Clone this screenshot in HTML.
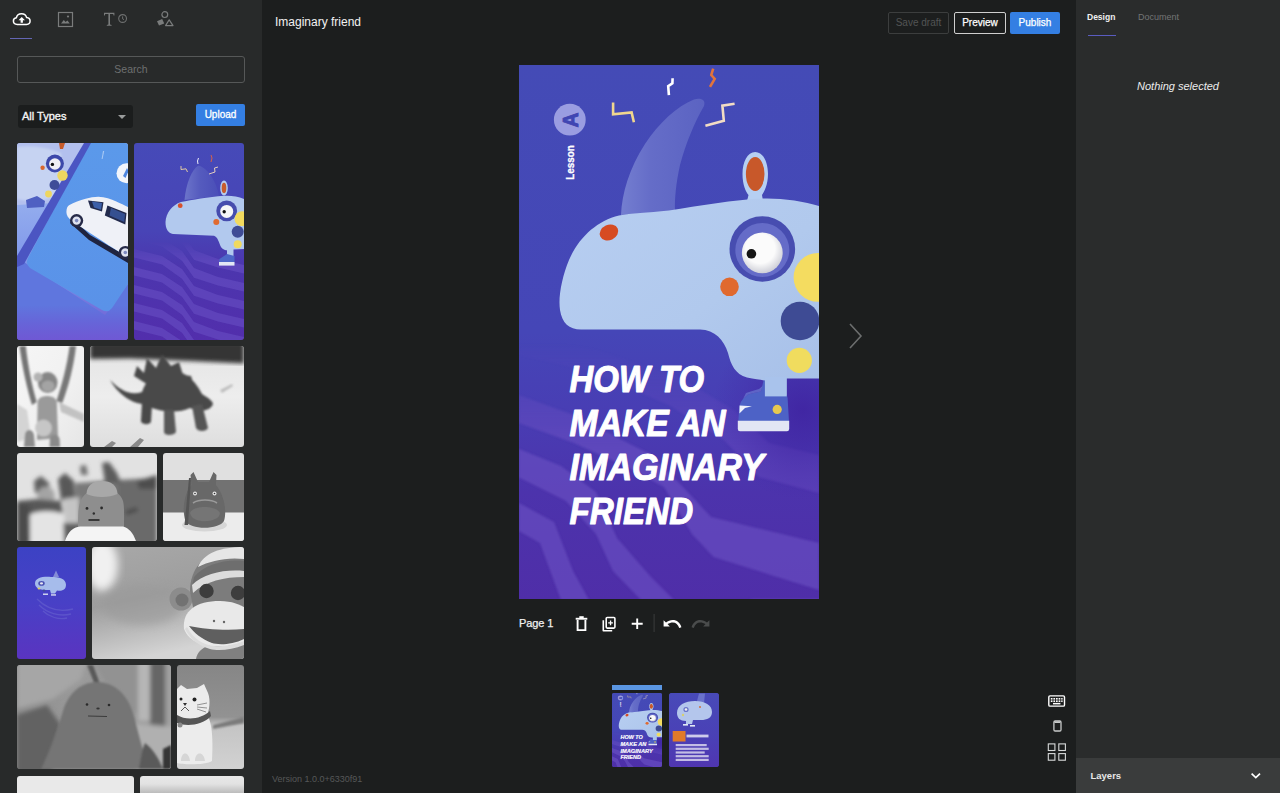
<!DOCTYPE html>
<html>
<head>
<meta charset="utf-8">
<title>Imaginary friend</title>
<style>
*{box-sizing:border-box;margin:0;padding:0}
html,body{width:1280px;height:793px;overflow:hidden;background:#1c1e1e;font-family:"Liberation Sans",sans-serif;color:#fff}
.abs{position:absolute}
#left{position:absolute;left:0;top:0;width:262px;height:793px;background:#282a2a;overflow:hidden}
#center{position:absolute;left:262px;top:0;width:814px;height:793px;background:#1c1e1e;overflow:hidden}
#right{position:absolute;left:1076px;top:0;width:204px;height:793px;background:#2a2c2c;overflow:hidden}
.tile{position:absolute;overflow:hidden;border-radius:3px}
.tile svg{position:absolute;left:0;top:0;width:100%;height:100%;display:block}
.btn{position:absolute;font-size:11px;text-align:center;border-radius:2px}
</style>
</head>
<body>

<!-- ================= LEFT PANEL ================= -->
<div id="left">
  <!-- tabs -->
  <div id="tabs">
  <!-- upload cloud -->
  <svg class="abs" style="left:12px;top:12px" width="19.5" height="14.2" viewBox="0 0 22 16">
    <path d="M6,14 C3.2,14 1.6,12.2 1.6,10.2 C1.6,8.2 3,6.8 4.9,6.6 C5.4,3.8 7.8,2 10.8,2 C13.6,2 15.8,3.7 16.5,6.2 C18.8,6.4 20.4,8 20.4,10.2 C20.4,12.4 18.7,14 16.4,14 Z" fill="none" stroke="#ffffff" stroke-width="1.7" stroke-linejoin="round"/>
    <path d="M11,5.6 L14.6,9.4 L12.3,9.4 L12.3,12 L9.7,12 L9.7,9.4 L7.4,9.4 Z" fill="#ffffff"/>
  </svg>
  <!-- image -->
  <svg class="abs" style="left:57px;top:11px" width="17" height="17" viewBox="0 0 17 17">
    <rect x="1.5" y="1.5" width="14" height="14" fill="none" stroke="#7a7c7c" stroke-width="1.2"/>
    <path d="M4,12.5 L6.8,9 L8.6,11 L10.4,9.6 L12.8,12.5Z" fill="#7a7c7c"/>
    <circle cx="11" cy="5.5" r="1.1" fill="#7a7c7c"/>
  </svg>
  <!-- text -->
  <svg class="abs" style="left:102px;top:11px" width="28" height="17" viewBox="0 0 28 17">
    <path d="M2,1.8 L12.4,1.8 L12.4,4.6 L11.6,4.6 L11.2,2.9 L8,2.9 L8,13.6 L9.6,14 L9.6,14.8 L4.8,14.8 L4.8,14 L6.4,13.6 L6.4,2.9 L3.2,2.9 L2.8,4.6 L2,4.6Z" fill="#7a7c7c"/>
    <circle cx="20.6" cy="7.5" r="3.9" fill="none" stroke="#6e7070" stroke-width="1.1"/>
    <path d="M20.6,5.4 L20.6,7.9 L22,8.6" fill="none" stroke="#6e7070" stroke-width="1"/>
  </svg>
  <!-- shapes -->
  <svg class="abs" style="left:155px;top:10px" width="21" height="18" viewBox="0 0 21 18">
    <circle cx="9.8" cy="4.6" r="2.9" fill="none" stroke="#7a7c7c" stroke-width="1.2"/>
    <path d="M2,11.2 L7.2,9 L9.2,13.4 L4,15.6Z" fill="#7a7c7c"/>
    <path d="M14.2,9.8 L18,15.6 L10.6,15.6Z" fill="none" stroke="#7a7c7c" stroke-width="1.2" stroke-linejoin="round"/>
  </svg>
</div>

  <div class="abs" style="left:10px;top:38px;width:22px;height:1px;background:#6466b4"></div>
  <!-- search -->
  <div class="abs" style="left:17px;top:56px;width:228px;height:27px;border:1px solid #565858;border-radius:3px;color:#6e7070;font-size:10.5px;line-height:25px;text-align:center">Search</div>
  <!-- dropdown -->
  <div class="abs" style="left:18px;top:105px;width:115px;height:23px;background:#1b1d1d;border-radius:3px;font-size:11px;line-height:23px;padding-left:4px;color:#f4f4f4;-webkit-text-stroke:0.35px #f4f4f4">All Types</div>
  <div class="abs" style="left:118px;top:115px;width:0;height:0;border-left:4px solid transparent;border-right:4px solid transparent;border-top:4px solid #9a9c9c"></div>
  <!-- upload -->
  <div class="btn" style="left:196px;top:104px;width:49px;height:22px;background:#347fe3;color:#fff;line-height:22px;font-size:10px;-webkit-text-stroke:0.3px #fff">Upload</div>

  <div id="gallery">
<svg width="0" height="0" style="position:absolute">
  <defs>
    <filter id="b1" x="-10%" y="-10%" width="120%" height="120%"><feGaussianBlur stdDeviation="1"/></filter>
    <filter id="b2" x="-10%" y="-10%" width="120%" height="120%"><feGaussianBlur stdDeviation="2"/></filter>
    <filter id="b4" x="-20%" y="-20%" width="140%" height="140%"><feGaussianBlur stdDeviation="4"/></filter>
    <filter id="b05" x="-10%" y="-10%" width="120%" height="120%"><feGaussianBlur stdDeviation="0.5"/></filter>
  </defs>
</svg>

<!-- Tile A : phone + car -->
<div class="tile" style="left:17px;top:143px;width:111px;height:197px">
<svg viewBox="0 0 111 197" preserveAspectRatio="none">
  <defs>
    <linearGradient id="ta1" x1="0" y1="0" x2="0" y2="1"><stop offset="0" stop-color="#a9bcf0"/><stop offset="0.3" stop-color="#94adee"/><stop offset="0.6" stop-color="#8098ea"/><stop offset="1" stop-color="#6c58d2"/></linearGradient>
    <linearGradient id="ta2" x1="0" y1="0" x2="0" y2="1"><stop offset="0" stop-color="#5b99ea"/><stop offset="1" stop-color="#5a92e8"/></linearGradient>
    <linearGradient id="ta3" x1="0" y1="0" x2="0" y2="1"><stop offset="0.58" stop-color="#5f76de"/><stop offset="0.8" stop-color="#6764d8"/><stop offset="1" stop-color="#6f58d4"/></linearGradient>
  </defs>
  <rect width="111" height="197" fill="url(#ta1)"/>
  <path d="M0,0 L70,0 L36,60 L0,62Z" fill="#b3c0ee"/>
  <path d="M0,4 C14,2 30,4 44,10 L47,46 C38,58 18,60 0,56Z" fill="#c6d3f2" filter="url(#b1)"/>
  <path d="M0,114 L10,121 L88,172 L111,141 L111,197 L0,197Z" fill="url(#ta3)"/>
  <path d="M72,0 L111,0 L111,141 L95,165 Q91,170.5 85,167 L13,125 Q8,121 11,115 Z" fill="url(#ta2)"/>
  <path d="M67,0 L74,0 L7,121 L0,124 L0,113Z" fill="#4b55c2"/>
  <!-- rhino bits -->
  <circle cx="37.9" cy="20.5" r="9" fill="#3d48aa"/><circle cx="37.9" cy="21" r="5.8" fill="#f0f0f4"/><circle cx="35.4" cy="21.4" r="1.7" fill="#111"/>
  <circle cx="45.5" cy="32.5" r="5.2" fill="#eed660"/><circle cx="37.5" cy="42" r="5" fill="#3f4c98"/><circle cx="31.5" cy="51" r="3.4" fill="#eed660"/>
  <circle cx="25.6" cy="24.8" r="2.2" fill="#d8672e"/>
  <path d="M42,0 L48,0 L46,6 L43,6Z" fill="#c65a2a"/>
  <path d="M9,57 L20,53 L28,58 L27,64 L10,65Z" fill="#4f60c2" filter="url(#b05)"/>
  <!-- white disc -->
  <circle cx="109.5" cy="30.2" r="10" fill="#f2f5fb"/><path d="M106,33 l4,-8 l1.5,3 l-3,7z" fill="#4d86e0"/>
  <path d="M86,8 l1.2,0 l-1.6,8 l-1,0z" fill="#a8c8f4"/>
  <!-- car -->
  <path d="M56,76 L73,92 L111,114 L111,120 L72,97 L53,80Z" fill="#1f2440"/>
  <path d="M49.4,69 C49.5,65 50.5,63.2 52,62.2 C57,59.5 63,57 68.6,55.8 C73,54.6 77,53.9 81.4,53.8 C88,54 94,56 99.3,58.4 C103.5,60.3 107.5,62.3 111,64 L111,114 C99,107 86,98.5 73.7,90.4 C66,85.6 60,81.4 54.5,77.6 C51,75 49.4,72 49.4,69Z" fill="#eff1f7"/>
  <path d="M71,57.4 L86.5,59.2 L85,68.4 L73.5,65 Z" fill="#222a4c"/><path d="M75,58.6 L85,60 L84,66.8 L77,64.6Z" fill="#3c5fa8"/>
  <path d="M90.4,62.4 L109.5,70 L108.3,81.6 L87.8,72.6 Z" fill="#222a4c"/><path d="M94,65 L108,71 L107.2,79 L92.5,72.4Z" fill="#3b5aa2" opacity="0.8"/>
  <circle cx="59.6" cy="77.6" r="6.6" fill="#262a48"/><circle cx="59.6" cy="77.6" r="4.2" fill="#dfe3f0"/><circle cx="59.6" cy="77.6" r="1.8" fill="#7f8bc0"/>
  <circle cx="108.3" cy="109.5" r="6.6" fill="#262a48"/><circle cx="108.3" cy="109.5" r="4.2" fill="#dfe3f0"/><circle cx="108.3" cy="109.5" r="1.8" fill="#7f8bc0"/>
</svg>
</div>

<!-- Tile B : rhino thumb -->
<div class="tile" style="left:134px;top:143px;width:110px;height:197px">
<svg viewBox="0 0 110 197" preserveAspectRatio="none">
  <defs>
    <linearGradient id="tb1" x1="0" y1="0" x2="0" y2="1"><stop offset="0" stop-color="#464ab8"/><stop offset="0.45" stop-color="#4844b6"/><stop offset="0.62" stop-color="#4c36ae"/><stop offset="1" stop-color="#522eac"/></linearGradient>
    <linearGradient id="tbf" x1="0" y1="0" x2="0" y2="1"><stop offset="0.5" stop-color="#fff" stop-opacity="0"/><stop offset="0.6" stop-color="#fff" stop-opacity="1"/></linearGradient>
    <mask id="tbm"><rect width="110" height="197" fill="url(#tbf)"/></mask>
    <linearGradient id="tbh" x1="0" y1="0" x2="1" y2="0"><stop offset="0" stop-color="#6c74ca"/><stop offset="0.45" stop-color="#555bbe"/><stop offset="1" stop-color="#4a4eb8"/></linearGradient>
  </defs>
  <rect width="110" height="197" fill="url(#tb1)"/>
  <g fill="#6c54c8" fill-opacity="0.5" filter="url(#b05)" mask="url(#tbm)">
    <path d="M0.0,88.0 L28.0,95.0 L48.0,108.0 L60.0,125.0 L84.0,134.0 L110.0,140.0 L110.0,148.5 L84.0,142.5 L60.0,134.8 L48.0,117.8 L28.0,103.5 L0.0,96.5Z"/>
    <path d="M0.0,106.0 L28.0,113.0 L48.0,126.0 L60.0,143.0 L84.0,152.0 L110.0,158.0 L110.0,166.5 L84.0,160.5 L60.0,152.8 L48.0,135.8 L28.0,121.5 L0.0,114.5Z"/>
    <path d="M0.0,124.0 L28.0,131.0 L48.0,144.0 L60.0,161.0 L84.0,170.0 L110.0,176.0 L110.0,184.5 L84.0,178.5 L60.0,170.8 L48.0,153.8 L28.0,139.5 L0.0,132.5Z"/>
    <path d="M0.0,142.0 L28.0,149.0 L48.0,162.0 L60.0,179.0 L84.0,188.0 L110.0,194.0 L110.0,202.5 L84.0,196.5 L60.0,188.8 L48.0,171.8 L28.0,157.5 L0.0,150.5Z"/>
    <path d="M0.0,160.0 L28.0,167.0 L48.0,180.0 L60.0,197.0 L84.0,206.0 L110.0,212.0 L110.0,220.5 L84.0,214.5 L60.0,206.8 L48.0,189.8 L28.0,175.5 L0.0,168.5Z"/>
    <path d="M0.0,178.0 L28.0,185.0 L48.0,198.0 L60.0,215.0 L84.0,224.0 L110.0,230.0 L110.0,238.5 L84.0,232.5 L60.0,224.8 L48.0,207.8 L28.0,193.5 L0.0,186.5Z"/>
    <path d="M0.0,196.0 L28.0,203.0 L48.0,216.0 L60.0,233.0 L84.0,242.0 L110.0,248.0 L110.0,256.5 L84.0,250.5 L60.0,242.8 L48.0,225.8 L28.0,211.5 L0.0,204.5Z"/>
    <path d="M0.0,70.0 L28.0,77.0 L48.0,90.0 L60.0,107.0 L84.0,116.0 L110.0,122.0 L110.0,130.5 L84.0,124.5 L60.0,116.8 L48.0,99.8 L28.0,85.5 L0.0,78.5Z"/>
  </g>
  <path d="M50.5,57 C52,40 58,26 64.5,22.5 C74,25 82,38 85,53Z" fill="url(#tbh)"/>
  <ellipse cx="90" cy="45" rx="3.8" ry="7.4" fill="#b4ccf0"/><ellipse cx="90" cy="45" rx="2.3" ry="5.2" fill="#c85c2c"/>
  <path d="M110,56 C104,53 96,52.5 90,52.8 C74,54 58,57 47,59 C38,62 32,70 31.5,79 C31.5,86 34,90 39,91 L80,92.7 C84,94 85,100 87,104 C89,107 92,107 93,107.5 L93,114 L99.5,114 L99.5,106.5 L110,106Z" fill="#b2c9ee"/>
  <circle cx="92.7" cy="67.9" r="10.4" fill="#464cae"/><circle cx="92.7" cy="68.4" r="6.5" fill="#f6f6f8"/><circle cx="90.2" cy="68.8" r="1.7" fill="#111"/>
  <circle cx="46.2" cy="62.7" r="2.4" fill="#d8502a"/><circle cx="82.3" cy="78.9" r="3" fill="#e06a30"/>
  <circle cx="108" cy="75.7" r="7.4" fill="#f2da5e"/><circle cx="103.7" cy="88.8" r="6" fill="#3f4c96"/><circle cx="103.7" cy="101.3" r="4" fill="#f0da5e"/>
  <path d="M85,119 L85.5,116 L93,111 L100.5,113 L100.5,119.5Z" fill="#4d67c8"/><rect x="85" y="119" width="15.5" height="3.6" fill="#e2e7f4"/>
  <g fill="none" stroke-width="0.9"><polyline points="47,23 47,26.5 52,25.8 53.5,29" stroke="#f0d8a0"/><polyline points="64.5,15 63.5,18 64,21" stroke="#fff"/><polyline points="77,12 78,15 77,19" stroke="#e8643c"/><polyline points="84,24 80.5,25 81,29 75,31" stroke="#f4dcc0"/></g>
</svg>
</div>

<!-- Tile C : wooden monkey -->
<div class="tile" style="left:17px;top:346px;width:67px;height:101px">
<svg viewBox="0 0 67 101" preserveAspectRatio="none">
  <defs><linearGradient id="tc1" x1="0" y1="0" x2="1" y2="1"><stop offset="0" stop-color="#f6f6f6"/><stop offset="0.6" stop-color="#f0f0f0"/><stop offset="1" stop-color="#e6e6e6"/></linearGradient></defs>
  <rect width="67" height="101" fill="url(#tc1)"/>
  <g filter="url(#b1)">
    <path d="M0,58 L10,64 L14,92 L0,96Z" fill="#d4d4d4"/>
    <path d="M42,56 L67,68 L67,76 L44,66Z" fill="#c2c2c2"/>
    <path d="M2.4,0 L8.8,0 C11,20 15,40 19.7,56 L15,59 C10,42 5,20 2.4,0Z" fill="#747474"/>
    <path d="M52.6,0 L59,0 C57,20 51,42 45.3,57 L39.5,55 C45,38 50,20 52.6,0Z" fill="#787878"/>
    <ellipse cx="30.7" cy="36.6" rx="9.8" ry="10.5" fill="#868686"/>
    <ellipse cx="21" cy="31" rx="4.5" ry="4.5" fill="#b2b2b2"/>
    <ellipse cx="31" cy="40" rx="6.5" ry="5.5" fill="#a4a4a4"/>
    <path d="M20.6,56 C21,48 39,48 39.8,56 L41,92 L20,94Z" fill="#9a9a9a"/>
    <ellipse cx="26.5" cy="82" rx="8.4" ry="8.6" fill="#c6c6c6"/>
    <path d="M7,101 L8,88 C9.5,82 16,83 17,89 L18,101Z" fill="#8c8c8c"/>
    <path d="M32.5,101 L33,92 C34.5,87 42,88 42.6,93 L43,101Z" fill="#8a8a8a"/>
  </g>
</svg>
</div>

<!-- Tile D : stegosaurus -->
<div class="tile" style="left:90px;top:346px;width:154px;height:101px">
<svg viewBox="0 0 154 101" preserveAspectRatio="none">
  <defs><linearGradient id="td1" x1="0" y1="0" x2="0" y2="1"><stop offset="0" stop-color="#e4e4e4"/><stop offset="0.5" stop-color="#ededed"/><stop offset="1" stop-color="#dedede"/></linearGradient></defs>
  <rect width="154" height="101" fill="url(#td1)"/>
  <path d="M0,-4 L154,-4 L154,17.5 L100,15 L40,12.5 L0,13Z" fill="#343434" filter="url(#b2)"/>
  <g filter="url(#b1)" fill="#4a4a4a">
    <path d="M20,34 C30,44 40,50 52,46 C56,34 64,26 78,24 C96,24 106,36 112,48 C118,52 122,54 123,58 C120,66 108,66 100,62 C88,68 66,66 54,58 C42,58 28,48 20,34Z"/>
    <path d="M44,30 L47,20 L54,27 L57,12 L66,22 L72,8 L81,20 L89,16 L93,29 L101,30 L104,40 L60,40Z" fill="#484848"/>
    <path d="M52,56 L62,58 L61,76 C58,80 50,78 51,74Z"/>
    <path d="M74,64 L84,64 L86,86 C84,90 74,90 74,86Z" fill="#585858"/>
    <path d="M102,60 L112,58 L118,82 C116,86 108,86 106,82Z" fill="#545454"/>
  </g>
  <path d="M130,44 L142,38 L143,40 L132,47Z" fill="#bdbdbd" filter="url(#b1)"/>
  <path d="M14,101 L22,95 L26,97 L22,101Z M40,101 L50,92 L54,94 L48,101Z" fill="#8a8a8a" filter="url(#b05)"/>
</svg>
</div>

<!-- Tile E : peanut -->
<div class="tile" style="left:17px;top:453px;width:140px;height:88px">
<svg viewBox="0 0 140 88" preserveAspectRatio="none">
  <rect width="140" height="88" fill="#e2e2e2"/>
  <g filter="url(#b2)">
    <path d="M99,27 L140,25 L140,92 L99,92Z" fill="#6a6a6a"/>
    <path d="M58,30 L100,27 L100,92 L58,92Z" fill="#787878"/>
    <path d="M85,10 L92,9 L100,20 L104,30 L88,30Z" fill="#5c5c5c"/>
    <path d="M63,13 L69,12 L71,22 L64,22Z" fill="#707070"/>
    <path d="M120,28 L140,22 L140,36 L122,36Z" fill="#4e4e4e"/>
    <path d="M108,58 L120,54 L121,58 L110,62Z" fill="#4a4a4a"/>
    <path d="M41,26 L48,20 L57,28 L58,48 L44,48Z" fill="#585858"/>
    <path d="M17,28 L24,23 L32,30 L33,40 L18,40Z" fill="#5e5e5e"/>
    <ellipse cx="29" cy="43" rx="9" ry="9.5" fill="#a4a4a4"/>
    <path d="M0,48 L20,46 L44,48 L46,60 L0,62Z" fill="#585858"/>
    <path d="M0,50 L13,52 L13,92 L0,92Z" fill="#4c4c4c"/>
    <path d="M46,46 L62,44 L62,72 L48,72Z" fill="#c4c4c4"/>
    <path d="M44,70 L62,70 L60,92 L44,92Z" fill="#5e5e5e"/>
    <path d="M13,62 C18,57 42,57 46,62 L47,92 L14,92Z" fill="#e4e4e4"/>
  </g>
  <g filter="url(#b05)">
    <path d="M61,76 C61,58 61.5,52 64,47 C66,43 68,41 70,40 L100,40 C103,42 104.5,44 106,48 C107.5,54 107,62 107,76Z" fill="#8e8e8e"/>
    <path d="M69.5,41 C70,32 76,28 85,28 C94,28 100,32 100.5,41 C92,45 78,45 69.5,41Z" fill="#a8a8a8"/>
    <path d="M48,88 C51,79 56,74 63,73.5 L106,73.5 C112,75 116,80 119,88Z" fill="#f4f4f4"/>
    <circle cx="70" cy="55.4" r="1.4" fill="#2a2a2a"/><circle cx="84.6" cy="55" r="1.4" fill="#2a2a2a"/><circle cx="76.8" cy="60.5" r="1.2" fill="#2e2e2e"/>
    <rect x="71.5" y="66.2" width="11" height="1.6" fill="#222"/>
  </g>
</svg>
</div>

<!-- Tile F : totoro -->
<div class="tile" style="left:163px;top:453px;width:81px;height:88px">
<svg viewBox="0 0 81 88" preserveAspectRatio="none">
  <rect width="81" height="88" fill="#e0e0e0"/>
  <rect y="27" width="81" height="33" fill="#727272" filter="url(#b05)"/>
  <rect y="59.5" width="81" height="29" fill="#ececec"/>
  <g filter="url(#b05)">
    <ellipse cx="41.5" cy="72" rx="22.5" ry="6.5" fill="#d6d6d6"/>
    <path d="M27.5,22 L30.5,19 L35,29 L46,29 L50.5,19 L53.5,22 L53,32 C60,40 64.5,56 61,68 C56,77 27,77 22.5,68 C18.5,56 21.5,40 28.5,32Z" fill="#686868"/>
    <path d="M27,60 C29,52 54,52 57,60 C57,70 29,72 27,60Z" fill="#747474"/>
    <path d="M30,50 C36,46 48,46 54,50" stroke="#9a9a9a" stroke-width="1.6" fill="none"/>
    <circle cx="32" cy="40.5" r="2" fill="#e4e4e4"/><circle cx="51.5" cy="40.5" r="2" fill="#e4e4e4"/><circle cx="32" cy="40.5" r="0.8" fill="#333"/><circle cx="51.5" cy="40.5" r="0.8" fill="#333"/>
    <path d="M26,25 L28,25 L25,72 L21.5,72Z" fill="#555"/>
  </g>
</svg>
</div>

<!-- Tile G : blue small -->
<div class="tile" style="left:17px;top:547px;width:69px;height:112px">
<svg viewBox="0 0 69 112" preserveAspectRatio="none">
  <defs><linearGradient id="tg1" x1="0" y1="0" x2="0" y2="1"><stop offset="0" stop-color="#3c42c4"/><stop offset="0.5" stop-color="#4840c6"/><stop offset="1" stop-color="#5a34c0"/></linearGradient></defs>
  <rect width="69" height="112" fill="url(#tg1)"/>
  <g fill="none" stroke="#6a66d0" stroke-width="1.3" opacity="0.55"><path d="M20,52 C28,60 40,66 56,62"/><path d="M22,58 C30,66 42,70 54,67"/><path d="M26,64 C32,70 42,73 50,71"/></g>
  <g filter="url(#b05)" transform="translate(0,10.5) scale(1,0.72)" opacity="0.93">
    <path d="M18,36 C18,28 26,26 34,27 C42,27 49,29 49,38 C49,46 44,47 40,46 L38,50 L34,50 L33,45 C26,46 18,44 18,36Z" fill="#aec6ee"/>
    <path d="M36,27 L39,18 L42,27Z" fill="#8a92d8"/>
    <circle cx="24.5" cy="36" r="3.2" fill="#4a52b0"/><circle cx="24.5" cy="36" r="1.6" fill="#f4f4f4"/>
    <circle cx="22" cy="43" r="1.4" fill="#e8d860"/><circle cx="27" cy="46" r="1.5" fill="#3f4c96"/>
    <rect x="26" y="50" width="5" height="2" fill="#dfe5f3"/><rect x="34" y="51" width="5" height="2" fill="#dfe5f3"/>
  </g>
</svg>
</div>

<!-- Tile H : sock monkey -->
<div class="tile" style="left:92px;top:547px;width:152px;height:112px">
<svg viewBox="0 0 152 112" preserveAspectRatio="none">
  <defs>
    <linearGradient id="th1" x1="0" y1="0" x2="0.3" y2="1"><stop offset="0" stop-color="#a8a8a8"/><stop offset="0.5" stop-color="#9e9e9e"/><stop offset="0.78" stop-color="#bcbcbc"/><stop offset="1" stop-color="#d4d4d4"/></linearGradient>
  </defs>
  <rect width="152" height="112" fill="url(#th1)"/>
  <ellipse cx="10" cy="18" rx="16" ry="26" fill="#f0f0f0" filter="url(#b4)"/>
  <ellipse cx="50" cy="58" rx="40" ry="20" fill="#9a9a9a" opacity="0.6" filter="url(#b4)"/>
  <g filter="url(#b05)">
    <path d="M104,112 C106,100 120,94 152,92 L152,112Z" fill="#808080"/>
    <circle cx="89" cy="52" r="11.5" fill="#8c8c8c"/><circle cx="90" cy="53" r="6.5" fill="#727272"/>
    <path d="M98,44 C98,22 112,6 134,2 L152,0 L152,80 L104,76Z" fill="#7c7c7c"/>
    <path d="M106,20 C112,6 128,0 152,0 L152,12 C134,10 118,14 106,20Z" fill="#e6e6e6"/>
    <path d="M102,30 C112,18 132,12 152,14 L152,24 C132,22 114,28 100,40Z" fill="#6e6e6e"/>
    <path d="M100,38 C112,26 134,22 152,24 L152,30 C132,30 114,34 101,46Z" fill="#dcdcdc"/>
    <circle cx="114.5" cy="44" r="7.2" fill="#3c3c3c"/><circle cx="146" cy="46" r="7.2" fill="#3c3c3c"/>
    <path d="M92,82 C90,64 104,54 128,54 C140,54 148,58 152,60 L152,96 C130,102 100,102 92,82Z" fill="#e9e9e9"/>
    <path d="M97,79 C112,82 134,84 152,82 L152,92 C140,98 126,98 120,96 C110,92 102,86 97,79Z" fill="#5e5e5e"/>
    <path d="M95,80 C101,92 112,98 122,99 C134,100 144,97 152,94 L152,98 C140,103 126,104 118,102 C106,99 97,90 93,82Z" fill="#dcdcdc"/>
    <circle cx="122" cy="74" r="1.2" fill="#666"/><circle cx="132" cy="75" r="1.2" fill="#666"/>
  </g>
</svg>
</div>

<!-- Tile I : blob -->
<div class="tile" style="left:17px;top:665px;width:154px;height:104px">
<svg viewBox="0 0 154 104" preserveAspectRatio="none">
  <defs><linearGradient id="ti1" x1="0" y1="0" x2="1" y2="0"><stop offset="0" stop-color="#8c8c8c"/><stop offset="0.4" stop-color="#9a9a9a"/><stop offset="1" stop-color="#989898"/></linearGradient></defs>
  <rect width="154" height="104" fill="url(#ti1)"/>
  <g filter="url(#b2)">
    <path d="M0,-4 L70,-4 L64,14 L36,34 L0,44Z" fill="#a6a6a6"/>
    <path d="M76,-4 L122,-4 L122,50 L100,40 L84,10Z" fill="#929292"/>
    <rect x="121" y="-4" width="12" height="60" fill="#b6b6b6"/>
    <rect x="133" y="-4" width="15.5" height="66" fill="#666666"/>
    <rect x="148.5" y="-4" width="10" height="66" fill="#a0a0a0"/>
    <path d="M112,58 L158,62 L158,108 L120,108Z" fill="#b0b0b0"/>
    <path d="M0,50 L30,40 L44,60 L34,108 L0,108Z" fill="#626262"/>
  </g>
  <g filter="url(#b1)">
    <path d="M70,0 L76,0 L83,19 L78,20Z" fill="#585858"/>
    <path d="M24,104 C32,88 40,66 46,46 C52,26 66,17 80,17 C96,17 110,28 116,48 C121,66 124,80 128,90 L138,104Z" fill="#747474"/>
    <path d="M122,104 C124,92 126,82 128,78 C136,84 142,94 146,104Z" fill="#5a5a5a"/>
    <path d="M146,104 L146,84 L154,80 L154,104Z" fill="#363636"/>
  </g>
  <circle cx="70" cy="39.5" r="1.3" fill="#2a2a2a"/><circle cx="92" cy="40" r="1.3" fill="#2a2a2a"/><ellipse cx="81" cy="43.5" rx="1.7" ry="1.1" fill="#333"/>
  <path d="M71,51 L90,51.5" stroke="#3c3c3c" stroke-width="1.1" fill="none"/>
</svg>
</div>

<!-- Tile J : cat -->
<div class="tile" style="left:177px;top:665px;width:67px;height:104px">
<svg viewBox="0 0 67 104" preserveAspectRatio="none">
  <defs><linearGradient id="tj1" x1="0" y1="0" x2="0" y2="1"><stop offset="0" stop-color="#868686"/><stop offset="0.5" stop-color="#929292"/><stop offset="0.58" stop-color="#c4c4c4"/><stop offset="1" stop-color="#d2d2d2"/></linearGradient></defs>
  <rect width="67" height="104" fill="url(#tj1)"/>
  <path d="M36,60 L67,52 L67,58 L36,64Z" fill="#7a7a7a" filter="url(#b1)"/>
  <g filter="url(#b05)">
    <path d="M0,24 L4,20 L10,24 L20,23 L27,19 L31,28 C34,36 32,46 30,50 C36,58 36,80 35,96 C30,100 6,100 0,98Z" fill="#ececec"/>
    <path d="M0,50 C10,56 24,54 33,46 L34,51 C26,60 10,62 0,58Z" fill="#555"/>
    <circle cx="3" cy="60" r="2.5" fill="#8a8a8a"/>
    <circle cx="17.5" cy="34.5" r="2" fill="#222"/><circle cx="4" cy="34" r="1.5" fill="#222"/>
    <path d="M6,38 L10,38 L8,41Z" fill="#333"/><path d="M4,46 L8,42 L12,46" stroke="#333" stroke-width="0.8" fill="none"/>
    <path d="M20,40 L30,38 M20,42 L30,43 M20,44 L29,47" stroke="#555" stroke-width="0.6"/>
    <path d="M4,96 C4,86 12,86 13,96Z M18,96 C18,86 27,86 28,96Z" fill="#d6d6d6"/>
  </g>
</svg>
</div>

<!-- Tile K / L -->
<div class="tile" style="left:17px;top:776px;width:117px;height:30px;background:#e9e9e9"></div>
<div class="tile" style="left:140px;top:776px;width:104px;height:30px;background:linear-gradient(#e8e8e8 0,#e2e2e2 8px,#bcbcbc 17px)"></div>
</div>
</div>

<!-- ================= CENTER ================= -->
<div id="center">
  <div class="abs" style="left:13px;top:15px;font-size:12px;color:#f2f2f2">Imaginary friend</div>
  <div id="page" class="abs" style="left:257px;top:65px;width:300px;height:534px;background:#444bb5;overflow:hidden">
<!--PAGESVG-->
<svg viewBox="0 0 300 534" width="300" height="534" style="position:absolute;left:0;top:0">
  <defs>
    <linearGradient id="bgg" x1="0" y1="0" x2="0" y2="1">
      <stop offset="0" stop-color="#444bb6"/>
      <stop offset="0.5" stop-color="#4546b7"/>
      <stop offset="0.64" stop-color="#483eb4"/>
      <stop offset="0.8" stop-color="#4c33ac"/>
      <stop offset="1" stop-color="#4f2ea8"/>
    </linearGradient>
    <linearGradient id="fade" x1="0" y1="0" x2="0" y2="1">
      <stop offset="0.52" stop-color="#fff" stop-opacity="0"/>
      <stop offset="0.72" stop-color="#fff" stop-opacity="1"/>
    </linearGradient>
    <mask id="stripemask"><rect x="0" y="0" width="300" height="534" fill="url(#fade)"/></mask>
    <linearGradient id="horng" x1="0" y1="0" x2="1" y2="0">
      <stop offset="0" stop-color="#747ed0"/>
      <stop offset="0.35" stop-color="#656dc8"/>
      <stop offset="1" stop-color="#5b63c2"/>
    </linearGradient>
    <linearGradient id="bodyg" x1="0" y1="0" x2="1" y2="1">
      <stop offset="0" stop-color="#b7cef1"/>
      <stop offset="0.55" stop-color="#b1c9ed"/>
      <stop offset="1" stop-color="#a6bfe8"/>
    </linearGradient>
    <radialGradient id="shg" cx="284" cy="345" r="90" gradientUnits="userSpaceOnUse"><stop offset="0" stop-color="#3f22a0" stop-opacity="0.85"/><stop offset="0.35" stop-color="#4124a2" stop-opacity="0.6"/><stop offset="0.7" stop-color="#4326a6" stop-opacity="0.25"/><stop offset="1" stop-color="#4326a8" stop-opacity="0"/></radialGradient>
    <filter id="sblur" x="-5%" y="-5%" width="110%" height="110%"><feGaussianBlur stdDeviation="1.1"/></filter>
    <radialGradient id="eyeg" cx="0.45" cy="0.4" r="0.6">
      <stop offset="0.6" stop-color="#fbfbfb"/>
      <stop offset="1" stop-color="#cfd0d8"/>
    </radialGradient>
  </defs>
  <g id="pageart">
  <rect width="300" height="534" fill="url(#bgg)"/>
  <!-- wavy stripes -->
  <g mask="url(#stripemask)" fill="#6a50c4" fill-opacity="0.62" filter="url(#sblur)">
    <path d="M0,438 L35,457 L54,506 L70,535 L42,535 L21,478 L0,466Z"/>
    <path d="M0,384 L42,401 L77,427 L98,473 L131,511 L155,535 L122,535 L94,506 L77,469 L47,436 L0,412.5Z"/>
    <path d="M0,330 L60,352 L103,375 L131,389 L164,422 L192,452 L300,478 L300,525 L194.5,492 L173,469 L145,422 L110,403 L55,378 L0,358Z"/>
    <path d="M0,290 L70,306 L150,340 L205,375 L240,412 L300,428 L300,390 L250,378 L215,345 L160,312 L75,284 L0,268Z" fill-opacity="0.45"/>
    <path d="M230,534 L300,534 L300,560Z"/>
  </g>
  <!-- shadow right of shoe -->
  <rect x="180" y="255" width="120" height="190" fill="url(#shg)"/>
  <!-- horn -->
  <path d="M102,150 C103,128 110,104 126,79 C140,58 158,41 175,34.5 C182,32.5 187,35 185,41 C176,56 167,78 161,100 C157,118 155.5,134 156,146Z" fill="url(#horng)"/>
  <!-- ear -->
  <path d="M236.2,87 C244,87 249,97 249,109 C249,120 245,127 243,130 L244,136 L228,136 L229.5,130 C227,127 223.5,120 223.5,109 C223.5,97 228.5,87 236.2,87Z" fill="#b6cff2"/>
  <ellipse cx="236.2" cy="109" rx="9.3" ry="17" fill="#c8582a"/>
  <!-- body -->
  <path d="M300,141 C285,136 262,133 244,133.5 C215,134.5 180,141 150,145.5 C128,148 112,148 100,150.5 C78,156 60,172 50,195 C43,212 39,232 41,245 C43,258 50,264.5 62,264.5 L181,264.5 C196,265 205,275 209,288 C212,300 216,309 228,312.5 C236,314.5 242,314 246,316 L246,335 L267.5,335 L267.5,313.5 L300,313.5Z" fill="url(#bodyg)"/>
  <!-- nostril -->
  <ellipse cx="90" cy="167.5" rx="9.6" ry="7.6" transform="rotate(-25 90 167.5)" fill="#d64b22"/>
  <!-- eye -->
  <circle cx="243.3" cy="184" r="32.8" fill="#474db0"/>
  <circle cx="243.3" cy="185" r="27" fill="#656cc8"/>
  <circle cx="243.3" cy="187.8" r="20.4" fill="url(#eyeg)"/>
  <circle cx="232.4" cy="188.8" r="4.8" fill="#151515"/>
  <!-- spots -->
  <circle cx="210.5" cy="221.8" r="9.3" fill="#e0692e"/>
  <circle cx="299" cy="212.4" r="24.4" fill="#f4dc60"/>
  <circle cx="281" cy="256" r="19.3" fill="#3e4b94"/>
  <circle cx="280.3" cy="295.4" r="12.6" fill="#f0dc5e"/>
  <!-- shoe -->
  <path d="M219.3,356.5 L220.3,341.5 Q221,337 224,334 L229,329.5 Q236,327.5 242,326.5 L244.5,315.5 L247,315.5 L247,330 L267.7,330 L268.6,333 L270,356.5 Z" fill="#4d62c6"/>
  <path d="M224,334 L229,329.5 Q236,327.5 242,326.5 L243.5,321 L240,324 Q233,326 227,328 Z" fill="#6a78d0" opacity="0.7"/>
  <rect x="245.9" y="312" width="21.8" height="19.4" fill="#a9c3ec"/>
  <path d="M218.8,355.8 L270.2,355.8 L270.2,364 Q270,366.2 268,366.2 L221,366.2 Q218.8,366.2 218.8,364 Z" fill="#e3e6f4"/>
  <path d="M220.6,340.6 L233,341.2 L226,343 L220.4,348.5Z" fill="#eef1fb"/>
  <circle cx="258.2" cy="344.4" r="4.6" fill="#e6c850"/>
  <!-- squiggles -->
  <g fill="none" stroke-width="2.6" stroke-linejoin="miter" stroke-linecap="butt">
    <polyline points="94.1,37.6 94.1,49.2 112.6,47.4 114.9,57.2" stroke="#f0d68e"/>
    <polyline points="153.6,13.2 153.4,18.3 149.2,21.2 149.9,30.2" stroke="#ffffff"/>
    <polyline points="194.2,3.6 192.3,10 195.7,13.8 191,21.8" stroke="#e2743c"/>
    <polyline points="215.6,38.8 203.4,40.7 204.8,55.7 186.4,60.8" stroke="#f2dcc4"/>
  </g>
  <!-- Lesson A -->
  <circle cx="50.8" cy="54.7" r="15.9" fill="#9a9de1"/>
  <text transform="translate(58.6,54.9) rotate(-90)" text-anchor="middle" font-family="Liberation Sans, sans-serif" font-weight="bold" font-size="22.5" fill="#4046b2" stroke="#4046b2" stroke-width="0.9" textLength="15" lengthAdjust="spacingAndGlyphs">A</text>
  <text transform="translate(54.8,97.4) rotate(-90)" text-anchor="middle" font-family="Liberation Sans, sans-serif" font-weight="bold" font-size="11" fill="#ffffff" stroke="#ffffff" stroke-width="0.3" textLength="34.6" lengthAdjust="spacingAndGlyphs">Lesson</text>
  <!-- headline -->
  <g font-family="Liberation Sans, sans-serif" font-weight="bold" font-style="italic" font-size="36.4" fill="#ffffff" stroke="#ffffff" stroke-width="1.0" stroke-linejoin="round">
    <text x="50.6" y="326.9" textLength="134.5" lengthAdjust="spacingAndGlyphs">HOW TO</text>
    <text x="50.6" y="371" textLength="156" lengthAdjust="spacingAndGlyphs">MAKE AN</text>
    <text x="50.6" y="415.2" textLength="194.5" lengthAdjust="spacingAndGlyphs">IMAGINARY</text>
    <text x="50.6" y="458.9" textLength="123.5" lengthAdjust="spacingAndGlyphs">FRIEND</text>
  </g>
</g>
</svg>
<!--/PAGESVG-->
</div>

  <!-- top buttons -->
  <div class="btn" style="left:626px;top:12px;width:61px;height:22px;border:1px solid #3c3e3e;color:#525454;line-height:20px;font-size:10px">Save draft</div>
  <div class="btn" style="left:692px;top:12px;width:52px;height:22px;border:1px solid #cfcfcf;color:#ffffff;line-height:20px;font-size:10px;-webkit-text-stroke:0.25px #fff">Preview</div>
  <div class="btn" style="left:748px;top:12px;width:50px;height:22px;background:#347fe3;color:#ffffff;line-height:22px;font-size:10px;-webkit-text-stroke:0.25px #fff">Publish</div>
  <!-- next arrow -->
  <svg class="abs" style="left:584px;top:320px" width="18" height="32" viewBox="0 0 18 32"><path d="M4,4 L15,16 L4,28" fill="none" stroke="#6c6e6e" stroke-width="1.6"/></svg>
  <!-- page controls -->
  <div class="abs" style="left:257px;top:617px;font-size:11px;color:#f0f0f0;line-height:13px;letter-spacing:-0.1px;-webkit-text-stroke:0.25px #f0f0f0">Page 1</div>
  <svg class="abs" style="left:311px;top:614px" width="140" height="20" viewBox="0 0 140 20">
    <g fill="none" stroke="#fff" stroke-width="1.9">
      <path d="M4.6,6 L4.6,16.1 L12.4,16.1 L12.4,6"/>
    </g>
    <rect x="2.7" y="3.8" width="11.6" height="1.9" fill="#fff"/><rect x="6.3" y="2.2" width="4.4" height="2" fill="#fff"/>
    <g fill="none" stroke="#fff" stroke-width="1.6" stroke-linejoin="round">
      <rect x="33.2" y="3.5" width="8.7" height="10.6" rx="1"/>
      <path d="M30.3,6.2 L30.3,16.8 L39.2,16.8"/>
    </g>
    <path d="M35.2,8.8 L39.9,8.8 M37.55,6.4 L37.55,11.2" stroke="#fff" stroke-width="1.3"/>
    <path d="M58.7,9.7 L69.7,9.7 M64.2,4.4 L64.2,15" stroke="#fff" stroke-width="1.9"/>
    <rect x="80.6" y="-1" width="1" height="19" fill="#3a3c3c"/>
    <path d="M90.6,6.2 L90.6,12.4 L96.8,12.4 L94.5,10.1 C96.2,8.9 98,8.4 99.8,8.4 C102.8,8.4 105.2,10.4 106.2,14 L108.4,13.3 C107.2,8.8 103.8,6.1 99.8,6.1 C97.2,6.1 94.9,7 93,8.6 Z" fill="#fff"/>
    <path d="M136.4,6.2 L136.4,12.4 L130.2,12.4 L132.5,10.1 C130.8,8.9 129,8.4 127.2,8.4 C124.2,8.4 121.8,10.4 120.8,14 L118.6,13.3 C119.8,8.8 123.2,6.1 127.2,6.1 C129.8,6.1 132.1,7 134,8.6 Z" fill="#4a4c4c"/>
  </svg>
  <!-- carousel -->
  <div class="abs" style="left:350px;top:685px;width:50px;height:5px;background:#5a96e2"></div>
  <div class="abs" style="left:350px;top:692.5px;width:50px;height:74px;border-radius:2px;overflow:hidden;background:#4648b6">
    <svg width="50" height="74" viewBox="0 22 300 487" preserveAspectRatio="none" style="display:block"><use href="#pageart"/></svg>
  </div>
  <div class="abs" style="left:407px;top:692.5px;width:50px;height:74px;border-radius:3px;overflow:hidden;background:#4a44b8">
    <svg width="50" height="74" viewBox="0 0 50 74" style="display:block">
      <defs><linearGradient id="t2g" x1="0" y1="0" x2="0" y2="1"><stop offset="0" stop-color="#484ab8"/><stop offset="0.6" stop-color="#4a40b6"/><stop offset="1" stop-color="#5036b0"/></linearGradient></defs>
      <rect width="50" height="74" fill="url(#t2g)"/>
      <g filter="url(#b05)">
        <path d="M27.5,10 L30,0.5 L36,0.5 L35,10Z" fill="#6a72cc"/>
        <path d="M8,20 C8,12 16,8 26,8 C36,8 43,12 43,19 C43,25 38,27 32,27 L24,27 L23,31 L17,31 L17,28 C11,28 8,25 8,20Z" fill="#b4c6ec"/>
        <circle cx="17" cy="16.5" r="2.6" fill="#6a74c8"/><circle cx="17" cy="16.5" r="1.3" fill="#f0f0f0"/>
        <circle cx="14" cy="22" r="1.2" fill="#d8d070"/><circle cx="31" cy="14" r="1" fill="#d07040"/>
        <rect x="14" y="31" width="5" height="1.6" fill="#e0e6f4"/><rect x="21" y="32" width="5" height="1.6" fill="#e0e6f4"/>
        <rect x="3.7" y="38" width="12.8" height="10.5" fill="#e07a2c"/>
      </g>
      <g fill="#f4f4fa" filter="url(#b05)" opacity="0.78">
        <rect x="17.5" y="41.6" width="22" height="2.8"/>
        <rect x="6.7" y="51" width="31" height="2.2" opacity="0.9"/>
        <rect x="6.7" y="54.7" width="33" height="2.2" opacity="0.9"/>
        <rect x="6.7" y="58.4" width="29" height="2.2" opacity="0.9"/>
        <rect x="6.7" y="62.1" width="33" height="2.2" opacity="0.9"/>
        <rect x="6.7" y="65.8" width="33" height="2.2" opacity="0.9"/>
      </g>
    </svg>
  </div>
  <!-- right-bottom icons -->
  <svg class="abs" style="left:784px;top:693px" width="22" height="70" viewBox="0 0 22 70">
    <rect x="2.8" y="2.9" width="15.7" height="10.2" rx="1.2" fill="none" stroke="#fff" stroke-width="1.4"/>
    <g fill="#fff"><rect x="4.8" y="5" width="1.7" height="1.6"/><rect x="7.4" y="5" width="1.7" height="1.6"/><rect x="10" y="5" width="1.7" height="1.6"/><rect x="12.6" y="5" width="1.7" height="1.6"/><rect x="15.2" y="5" width="1.4" height="1.6"/>
    <rect x="4.8" y="7.4" width="1.7" height="1.6"/><rect x="7.4" y="7.4" width="1.7" height="1.6"/><rect x="10" y="7.4" width="1.7" height="1.6"/><rect x="12.6" y="7.4" width="1.7" height="1.6"/><rect x="15.2" y="7.4" width="1.4" height="1.6"/>
    <rect x="7" y="9.9" width="7.4" height="1.5"/></g>
    <rect x="7.9" y="28" width="7.1" height="10" rx="1.2" fill="none" stroke="#c8caca" stroke-width="1.3"/>
    <rect x="8.4" y="28.4" width="6" height="1.6" fill="#c8caca"/>
    <g fill="none" stroke="#d8dada" stroke-width="1.1"><rect x="2.3" y="50.9" width="6.6" height="6.6"/><rect x="12.8" y="50.9" width="6.6" height="6.6"/><rect x="2.3" y="60.6" width="6.6" height="6.6"/><rect x="12.8" y="60.6" width="6.6" height="6.6"/></g>
  </svg>
  <div class="abs" style="left:10px;top:773.5px;font-size:9px;color:#565858">Version 1.0.0+6330f91</div>
</div>

<!-- ================= RIGHT PANEL ================= -->
<div id="right">
  <div class="abs" style="left:11px;top:12px;font-size:8.5px;font-weight:bold;color:#f0f0f0">Design</div>
  <div class="abs" style="left:62px;top:12px;font-size:9px;color:#737575">Document</div>
  <div class="abs" style="left:12px;top:35px;width:28px;height:1px;background:#5a5cc0"></div>
  <div class="abs" style="left:0;top:80px;width:204px;text-align:center;font-size:11px;font-style:italic;color:#ececec">Nothing selected</div>
  <div class="abs" style="left:0;top:758px;width:204px;height:35px;background:#3a3c3c"></div>
  <div class="abs" style="left:14.5px;top:770px;font-size:9.5px;font-weight:bold;color:#e8e8e8">Layers</div>
  <svg class="abs" style="left:173px;top:771px" width="14" height="10" viewBox="0 0 14 10"><path d="M2.6,2.6 L6.8,6.6 L11,2.6" fill="none" stroke="#fff" stroke-width="1.7"/></svg>
</div>

</body>
</html>
